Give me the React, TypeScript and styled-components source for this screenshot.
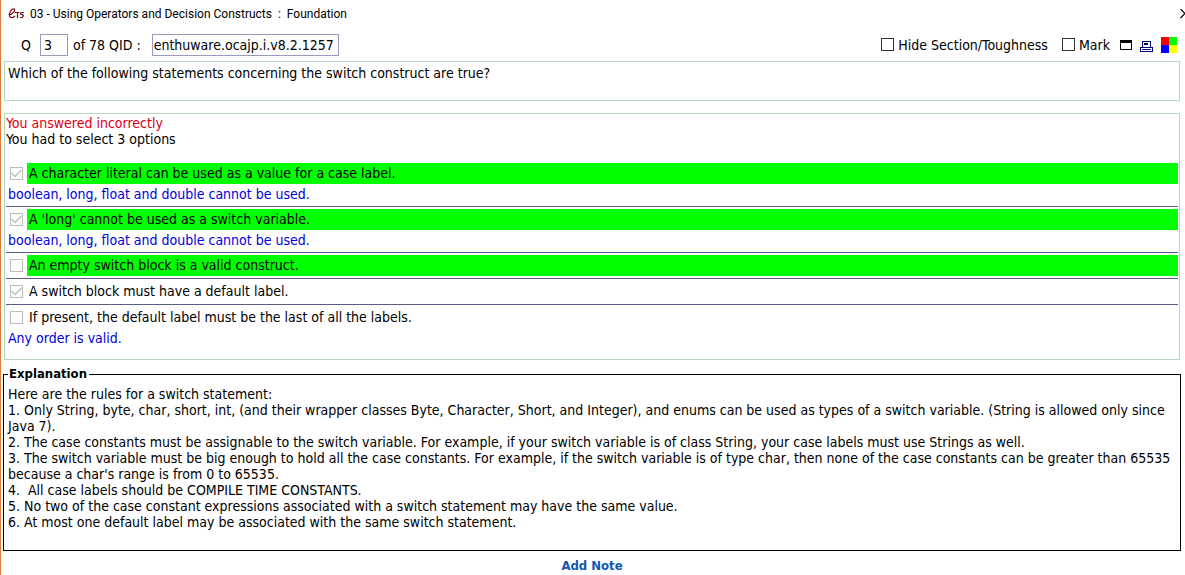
import React from "react";
import styled, { createGlobalStyle } from "styled-components";

const GlobalStyle = createGlobalStyle`
  * { box-sizing: border-box; }
  body {
    margin: 0;
    background: #fff;
    color: #000;
    font: 14px/16px "DejaVu Sans Condensed", Verdana, sans-serif;
  }
`;

const Window = styled.div`
  min-height: 100vh;
  border-left: 1px solid #e07b39;
  overflow: hidden;
`;

const TitleBar = styled.header`
  display: flex;
  align-items: center;
  gap: 6px;
  height: 28px;
  padding-left: 7px;
`;

const Title = styled.h1`
  margin: 0;
  flex: 1;
  font: 12px/16px Roboto, "Segoe UI", sans-serif;
  white-space: pre;
`;

const IconButton = styled.button`
  display: flex;
  padding: 0;
  border: 0;
  background: none;
`;

const Content = styled.main`
  padding: 0 4px 0 2px;
`;

const Toolbar = styled.div`
  display: flex;
  align-items: center;
  height: 33px;
  padding: 0 4px 0 18px;
`;

const Field = styled.label<{ $gap: number }>`
  display: flex;
  align-items: center;
  gap: ${(p) => p.$gap}px;
  white-space: pre;
`;

const TextBox = styled.input<{ $width: number }>`
  width: ${(p) => p.$width}px;
  height: 22px;
  padding: 0 1px;
  border: 1px solid #9a9abf;
  font: inherit;
  color: inherit;
  background: #fff;
`;

const NumberBox = styled(TextBox)`
  padding-left: 3px;
  margin-right: 5px;
`;

const Tools = styled.div`
  display: flex;
  align-items: center;
  gap: 10px;
  margin-left: auto;
`;

const CheckFields = styled.div`
  display: flex;
  gap: 14px;
`;

const CheckBox = styled.input.attrs({ type: "checkbox" })`
  appearance: none;
  flex: none;
  width: 13px;
  height: 13px;
  margin: 0;
  border: 1px solid #333;
  background: #fff;
  &:disabled { border-color: #bdbdbd; }
  &:checked {
    background: url("data:image/svg+xml,%3Csvg xmlns='http://www.w3.org/2000/svg' viewBox='0 0 11 11'%3E%3Cpath d='M0.5 5L4 8.5L10.5 2' fill='none' stroke='%23b8c0b8' stroke-width='1.4'/%3E%3C/svg%3E");
  }
`;

const ToolIcons = styled.div`
  display: flex;
  align-items: center;
  gap: 8px;
`;

const Panel = styled.section`
  margin: 0 1px 12px;
  border: 1px solid #b9d7bd;
`;

const Question = styled(Panel)`
  min-height: 40px;
  padding: 3px;
`;

const Answers = styled(Panel)`
  padding: 1px 1px 9px;
  margin-bottom: 6px;
`;

const Status = styled.p<{ $wrong?: boolean }>`
  margin: 0;
  color: ${(p) => (p.$wrong ? "#dc0014" : "#000")};
`;

const OptionList = styled.ul`
  list-style: none;
  margin: 14px 0 0;
  padding: 0;
`;

const Option = styled.li`
  padding-top: 2px;
  & + & { border-top: 1px solid #5c5c85; }
`;

const OptionRow = styled.label<{ $last: boolean }>`
  display: flex;
  align-items: center;
  gap: 4px;
  padding-left: 4px;
  margin-bottom: ${(p) => (p.$last ? 2 : 0)}px;
`;

const OptionText = styled.span<{ $correct?: boolean }>`
  flex: 1;
  padding: 2px 2px 3px;
  background: ${(p) => (p.$correct ? "#00ff00" : "transparent")};
`;

const Remark = styled.p`
  margin: 0;
  padding: 2px 2px 4px;
  color: #0000e0;
`;

const Explanation = styled.fieldset`
  min-width: 0;
  margin: 0;
  padding: 4px 2px 20px 4px;
  border: 1px solid #000;
`;

const Legend = styled.legend`
  padding: 0 2px 0 1px;
  font-size: 13px;
  font-weight: bold;
`;

const Rule = styled.p`
  margin: 0;
  white-space: pre-wrap;
`;

const Footer = styled.footer`
  display: flex;
  justify-content: center;
  padding-top: 7px;
`;

const NoteLink = styled.a`
  color: #1155b5;
  font-size: 13px;
  font-weight: bold;
  text-decoration: none;
`;

const LogoIcon = () => (
  <svg width="16" height="12" viewBox="0 0 16 12" fill="none" stroke="#7a0a12" strokeWidth="1.2" aria-hidden="true">
    <path d="M0.500 6.500H3L6.500 3.500V1H4.500L2.500 3L1.500 6V8.500L2.500 9.500H5L7 8" />
    <path d="M7 4.500H11.500M9.500 4.500V10M16 4.500H13L12.500 5.500L13 6.500H14.500L15.500 7.500L14.500 9.500H12" />
  </svg>
);

const CloseIcon = () => (
  <svg width="5" height="11" viewBox="0 0 5 11" fill="none" stroke="#000" strokeWidth="1.2" aria-hidden="true">
    <path d="M0.500 0L5 4.500L0.500 9" />
  </svg>
);

const WindowIcon = () => (
  <svg width="12" height="10" viewBox="0 0 12 10" shapeRendering="crispEdges" aria-hidden="true">
    <rect x="0.5" y="0.5" width="11" height="9" fill="#fff" stroke="#000" />
    <rect width="12" height="3" fill="#000" />
  </svg>
);

const PrintIcon = () => (
  <svg width="13" height="16" viewBox="0 0 13 16" fill="none" stroke="#000070" shapeRendering="crispEdges" aria-hidden="true">
    <path d="M2.500 10.500V4.500H10.500V10.500M4.500 6.500H7.500V7.500H4.500ZM0.500 10.500H12.500V14.500H0.500ZM2 12.500H11" />
  </svg>
);

const ColorsIcon = () => (
  <svg width="16" height="16" viewBox="0 0 16 16" shapeRendering="crispEdges" aria-hidden="true">
    <path fill="#f00" d="M0 0h8v8H0z" />
    <path fill="#0f0" d="M8 0h8v8H8z" />
    <path fill="#00f" d="M0 8h8v8H0z" />
    <path fill="#ff0" d="M8 8h8v8H8z" />
  </svg>
);

const options = [
  { text: "A character literal can be used as a value for a case label.", chosen: true, correct: true, remark: "boolean, long, float and double cannot be used." },
  { text: "A 'long' cannot be used as a switch variable.", chosen: true, correct: true, remark: "boolean, long, float and double cannot be used." },
  { text: "An empty switch block is a valid construct.", chosen: false, correct: true },
  { text: "A switch block must have a default label.", chosen: true, correct: false },
  { text: "If present, the default label must be the last of all the labels.", chosen: false, correct: false, remark: "Any order is valid." },
];

const rules = [
  "Here are the rules for a switch statement:",
  "1. Only String, byte, char, short, int, (and their wrapper classes Byte, Character, Short, and Integer), and enums can be used as types of a switch variable. (String is allowed only since Java 7).",
  "2. The case constants must be assignable to the switch variable. For example, if your switch variable is of class String, your case labels must use Strings as well.",
  "3. The switch variable must be big enough to hold all the case constants. For example, if the switch variable is of type char, then none of the case constants can be greater than 65535 because a char's range is from 0 to 65535.",
  "4.  All case labels should be COMPILE TIME CONSTANTS.",
  "5. No two of the case constant expressions associated with a switch statement may have the same value.",
  "6. At most one default label may be associated with the same switch statement.",
];

export default function App() {
  return (
    <Window>
      <GlobalStyle />
      <TitleBar>
        <LogoIcon />
        <Title>{"03 - Using Operators and Decision Constructs  :  Foundation"}</Title>
        <IconButton aria-label="Close"><CloseIcon /></IconButton>
      </TitleBar>
      <Content>
        <Toolbar>
          <Field $gap={9}>Q<NumberBox $width={28} defaultValue="3" /></Field>
          <Field $gap={11}>of 78 QID :<TextBox $width={187} defaultValue="enthuware.ocajp.i.v8.2.1257" /></Field>
          <Tools>
            <CheckFields>
              <Field $gap={4}><CheckBox />Hide Section/Toughness</Field>
              <Field $gap={4}><CheckBox />Mark</Field>
            </CheckFields>
            <ToolIcons>
              <IconButton aria-label="Open window"><WindowIcon /></IconButton>
              <IconButton aria-label="Print"><PrintIcon /></IconButton>
              <IconButton aria-label="Colors"><ColorsIcon /></IconButton>
            </ToolIcons>
          </Tools>
        </Toolbar>
        <Question>Which of the following statements concerning the switch construct are true?</Question>
        <Answers>
          <Status $wrong>You answered incorrectly</Status>
          <Status>You had to select 3 options</Status>
          <OptionList>
            {options.map((o) => (
              <Option key={o.text}>
                <OptionRow $last={!o.remark}>
                  <CheckBox disabled defaultChecked={o.chosen} />
                  <OptionText $correct={o.correct}>{o.text}</OptionText>
                </OptionRow>
                {o.remark && <Remark>{o.remark}</Remark>}
              </Option>
            ))}
          </OptionList>
        </Answers>
        <Explanation>
          <Legend>Explanation</Legend>
          {rules.map((r) => <Rule key={r}>{r}</Rule>)}
        </Explanation>
        <Footer><NoteLink href="#note">Add Note</NoteLink></Footer>
      </Content>
    </Window>
  );
}
